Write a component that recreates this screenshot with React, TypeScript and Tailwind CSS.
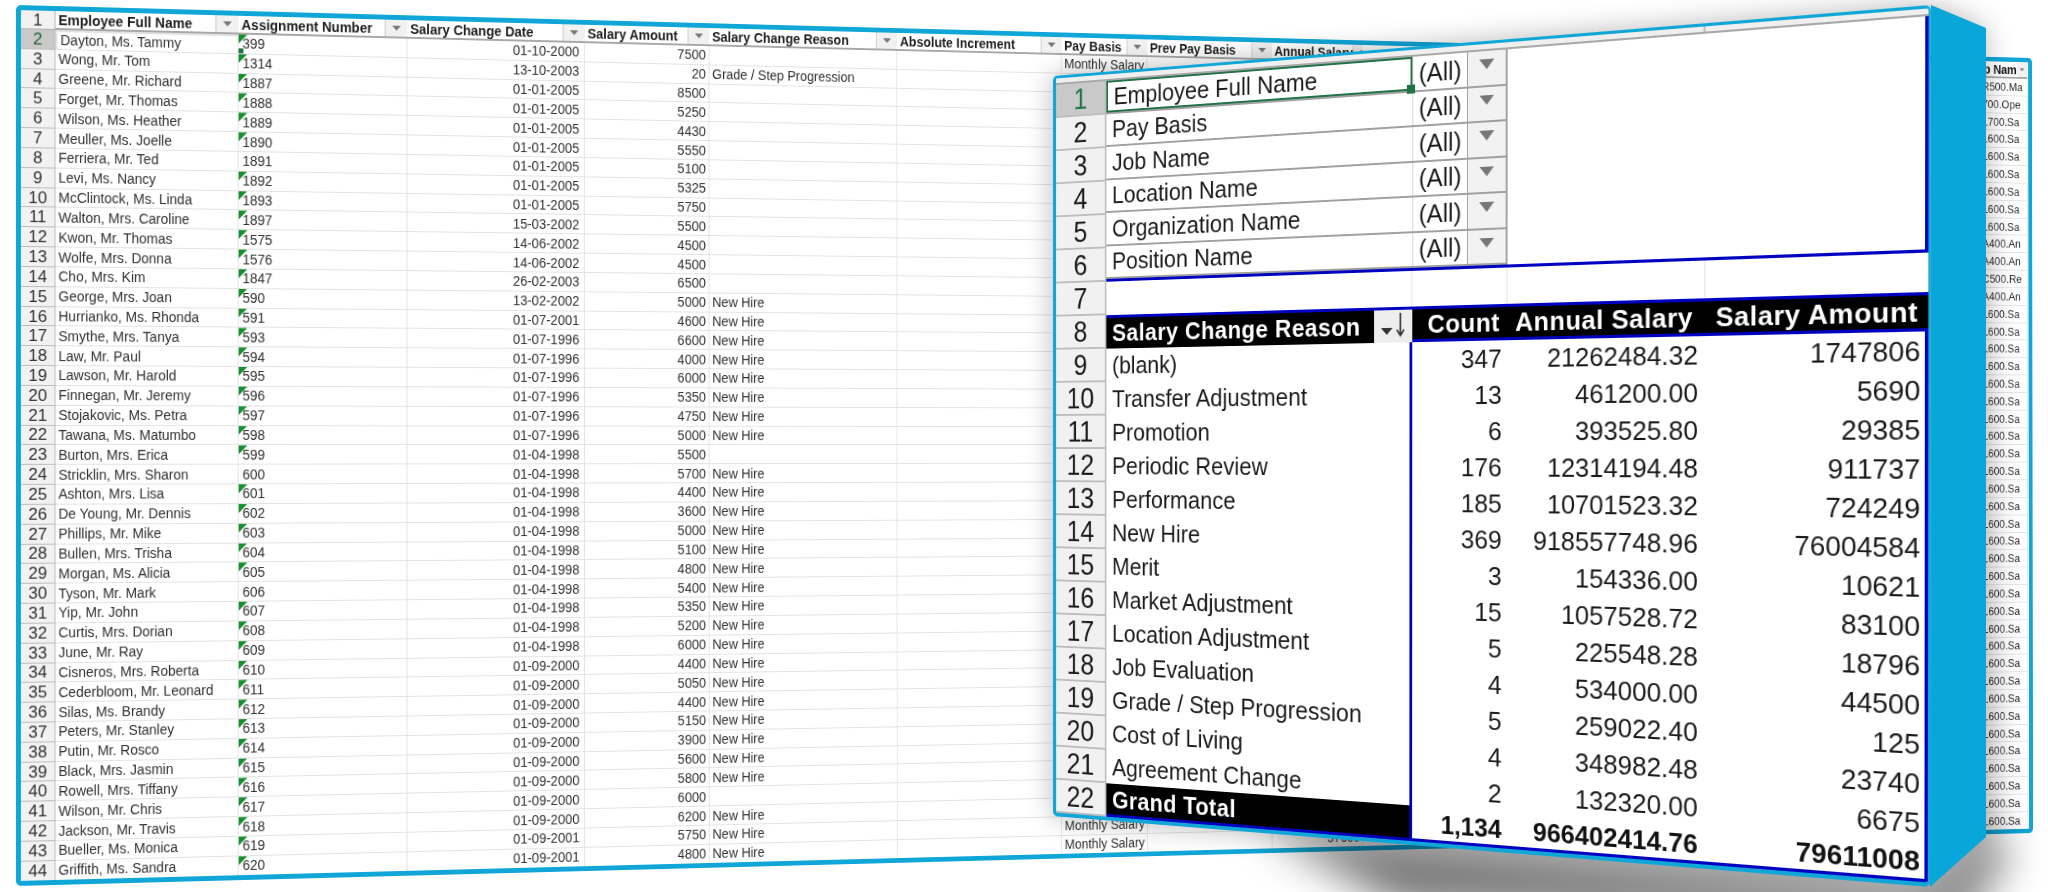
import React from "react";

type P = [number, number];

function quadMatrix(w: number, h: number, q: [P, P, P, P]): string {
  const [[x0, y0], [x1, y1], [x2, y2], [x3, y3]] = q;
  const dx1 = x1 - x2, dx2 = x3 - x2, sx = x0 - x1 + x2 - x3;
  const dy1 = y1 - y2, dy2 = y3 - y2, sy = y0 - y1 + y2 - y3;
  const det = dx1 * dy2 - dx2 * dy1;
  const g = (sx * dy2 - dx2 * sy) / det;
  const k = (dx1 * sy - sx * dy1) / det;
  const a = x1 - x0 + g * x1, b = x3 - x0 + k * x3;
  const d = y1 - y0 + g * y1, e = y3 - y0 + k * y3;
  return `matrix3d(${a / w},${d / w},0,${g / w},${b / h},${e / h},0,${k / h},0,0,1,0,${x0},${y0},0,1)`;
}

const R1 = ["Dayton, Ms. Tammy|399|01-10-2000|7500|","Wong, Mr. Tom|1314|13-10-2003|20|Grade / Step Progression","Greene, Mr. Richard|1887|01-01-2005|8500|","Forget, Mr. Thomas|1888|01-01-2005|5250|","Wilson, Ms. Heather|1889|01-01-2005|4430|","Meuller, Ms. Joelle|1890|01-01-2005|5550|","Ferriera, Mr. Ted|1891|01-01-2005|5100|","Levi, Ms. Nancy|1892|01-01-2005|5325|","McClintock, Ms. Linda|1893|01-01-2005|5750|","Walton, Mrs. Caroline|1897|15-03-2002|5500|","Kwon, Mr. Thomas|1575|14-06-2002|4500|","Wolfe, Mrs. Donna|1576|14-06-2002|4500|","Cho, Mrs. Kim|1847|26-02-2003|6500|","George, Mrs. Joan|590|13-02-2002|5000|New Hire","Hurrianko, Ms. Rhonda|591|01-07-2001|4600|New Hire","Smythe, Mrs. Tanya|593|01-07-1996|6600|New Hire","Law, Mr. Paul|594|01-07-1996|4000|New Hire","Lawson, Mr. Harold|595|01-07-1996|6000|New Hire","Finnegan, Mr. Jeremy|596|01-07-1996|5350|New Hire","Stojakovic, Ms. Petra|597|01-07-1996|4750|New Hire","Tawana, Ms. Matumbo|598|01-07-1996|5000|New Hire","Burton, Mrs. Erica|599|01-04-1998|5500|","Stricklin, Mrs. Sharon|600|01-04-1998|5700|New Hire","Ashton, Mrs. Lisa|601|01-04-1998|4400|New Hire","De Young, Mr. Dennis|602|01-04-1998|3600|New Hire","Phillips, Mr. Mike|603|01-04-1998|5000|New Hire","Bullen, Mrs. Trisha|604|01-04-1998|5100|New Hire","Morgan, Ms. Alicia|605|01-04-1998|4800|New Hire","Tyson, Mr. Mark|606|01-04-1998|5400|New Hire","Yip, Mr. John|607|01-04-1998|5350|New Hire","Curtis, Mrs. Dorian|608|01-04-1998|5200|New Hire","June, Mr. Ray|609|01-04-1998|6000|New Hire","Cisneros, Mrs. Roberta|610|01-09-2000|4400|New Hire","Cederbloom, Mr. Leonard|611|01-09-2000|5050|New Hire","Silas, Ms. Brandy|612|01-09-2000|4400|New Hire","Peters, Mr. Stanley|613|01-09-2000|5150|New Hire","Putin, Mr. Rosco|614|01-09-2000|3900|New Hire","Black, Mrs. Jasmin|615|01-09-2000|5600|New Hire","Rowell, Mrs. Tiffany|616|01-09-2000|5800|New Hire","Wilson, Mr. Chris|617|01-09-2000|6000|","Jackson, Mr. Travis|618|01-09-2000|6200|New Hire","Bueller, Ms. Monica|619|01-09-2001|5750|New Hire","Griffith, Ms. Sandra|620|01-09-2001|4800|New Hire"];
const noTick = new Set(["1891", "600", "606"]);
const lastCol = (i: number) => i === 0 ? "R500.Ma" : i === 1 ? "700.Ope" : i === 2 ? "L700.Sa" : i === 9 || i === 10 || i === 12 ? "A400.An" : i === 11 ? "C500.Re" : "L600.Sa";

const BACK_COLS = "grid grid-cols-[35px_188px_177px_190px_136px_209px_187px_99px_146px_108px_771px_59px]";
const headers = ["Employee Full Name", "Assignment Number", "Salary Change Date", "Salary Amount", "Salary Change Reason", "Absolute Increment", "Pay Basis", "Prev Pay Basis", "Annual Salary"];

function Arrow({ cls }: { cls: string }) {
  return <span className={`block [clip-path:polygon(0_0,100%_0,50%_100%)] ${cls}`} />;
}

function BackSheet() {
  const W = 2316, H = 881;
  return (
    <div
      className="absolute left-0 top-0 origin-top-left box-border overflow-hidden rounded-[5px] border-[5px] border-[#10a7d8] bg-white font-['Liberation_Sans',Arial,sans-serif] text-[14px] leading-none text-[#303030] w-[2316px] h-[881px] blur-[0.4px]"
      style={{ transform: quadMatrix(W, H, [[16, 5], [2032, 58], [2033, 833], [16, 886]]) }}
    >
      <div className={`${BACK_COLS} h-[19px]`}>
        <div className="flex items-center justify-center border-r border-b border-[#b5b5b5] bg-[#f2f2f2] text-[17px]">1</div>
        {headers.map((h) => (
          <div key={h} className="flex items-center justify-between overflow-hidden border-b-2 border-[#a8a8a8] pl-[3px] font-bold text-[#1c1c1c] whitespace-nowrap">
            <span>{h}</span>
            <span className="flex h-full w-[24px] shrink-0 items-center justify-center border-l border-[#ccc] bg-[#f1f1f1]"><Arrow cls="h-[5px] w-[9px] bg-[#777]" /></span>
          </div>
        ))}
        <div />
        <div className="flex items-center justify-end border-b-2 border-[#a8a8a8] font-bold text-[#1c1c1c] whitespace-nowrap">
          <span>p Nam</span>
          <span className="flex h-full w-[14px] shrink-0 items-center justify-center bg-[#f1f1f1]"><Arrow cls="h-[4px] w-[7px] bg-[#888]" /></span>
        </div>
      </div>
      {R1.map((r, i) => {
        const [name, num, date, amt, reason] = r.split("|");
        const cell = "flex items-center overflow-hidden whitespace-nowrap border-b border-r border-[#e3e3e3]";
        return (
          <div key={i} className={`${BACK_COLS} h-[19.83px]`}>
            <div className={`flex items-center justify-center border-r border-b border-[#bdbdbd] text-[17px] ${i === 0 ? "bg-[#c9c9c9] text-[#1f5c38]" : "bg-[#f2f2f2]"}`}>{i + 2}</div>
            <div className={`${cell} pl-[3px] ${i === 0 ? "border-2 border-[#217346]" : ""}`}>{name}</div>
            <div className={`${cell} relative pl-[4px]`}>
              {!noTick.has(num) && <span className="absolute left-0 top-0 h-[9px] w-[9px] bg-[#15902c] [clip-path:polygon(0_0,100%_0,0_100%)]" />}
              {i === 0 && <span className="absolute bottom-0 left-0 h-[5px] w-[5px] bg-[#217346]" />}
              {num}
            </div>
            <div className={`${cell} justify-end pr-[5px]`}>{date}</div>
            <div className={`${cell} justify-end pr-[3px]`}>{amt}</div>
            <div className={`${cell} pl-[3px]`}>{reason}</div>
            <div className={cell} />
            <div className={`${cell} pl-[3px]`}>Monthly Salary</div>
            <div className={cell} />
            <div className={`${cell} justify-end pr-[3px]`}>{Number(amt) * 12}</div>
            <div className={cell} />
            <div className={`${cell} text-[13px]`}>{lastCol(i)}</div>
          </div>
        );
      })}
    </div>
  );
}

const pivot: [string, string, string, string][] = [
  ["(blank)", "347", "21262484.32", "1747806"],
  ["Transfer Adjustment", "13", "461200.00", "5690"],
  ["Promotion", "6", "393525.80", "29385"],
  ["Periodic Review", "176", "12314194.48", "911737"],
  ["Performance", "185", "10701523.32", "724249"],
  ["New Hire", "369", "918557748.96", "76004584"],
  ["Merit", "3", "154336.00", "10621"],
  ["Market Adjustment", "15", "1057528.72", "83100"],
  ["Location Adjustment", "5", "225548.28", "18796"],
  ["Job Evaluation", "4", "534000.00", "44500"],
  ["Grade / Step Progression", "5", "259022.40", "125"],
  ["Cost of Living", "4", "348982.48", "23740"],
  ["Agreement Change", "2", "132320.00", "6675"],
];
const filters = ["Employee Full Name", "Pay Basis", "Job Name", "Location Name", "Organization Name", "Position Name"];

function FrontSheet() {
  const W = 935, H = 806;
  const nums = Array.from({ length: 22 }, (_, i) => i + 1);
  return (
    <div
      className="absolute left-0 top-0 origin-top-left box-border flex h-[806px] w-[935px] flex-col overflow-hidden rounded-[5px] border-t-[3px] border-b-4 border-l-4 border-r-2 border-[#10a7d8] bg-white font-['Liberation_Sans',Arial,sans-serif] text-[26px] leading-none text-[#1a1a1a] blur-[0.4px]"
      style={{ transform: quadMatrix(W, H, [[1053, 76], [1931, 5], [1930, 887], [1053, 816]]) }}
    >
      <div className="flex h-[7px] shrink-0 border-b-2 border-[#a8a8a8] bg-[#efefef]">
        <div className="w-[63px]" />
        <div className="w-[658px] border-r-2 border-[#bdbdbd]" />
      </div>
      <div className="flex min-h-0 flex-1">
        <div className="flex w-[63px] shrink-0 flex-col">
          {nums.map((n) => (
            <div key={n} className={`flex h-[36px] shrink-0 items-center justify-center border-r-2 border-b-2 border-[#bdbdbd] text-[31px] ${n === 1 ? "bg-[#c9c9c9] text-[#217346]" : "bg-[#f1f1f1]"}`}>{n}</div>
          ))}
        </div>
        <div className="flex w-[866px] flex-col">
          <div className="flex h-[216px] shrink-0 border-r-[3px] border-b-[3px] border-[#0000c0]">
            <div className="w-[458px] shrink-0">
              {filters.map((f, i) => (
                <div key={f} className="grid h-[35.5px] grid-cols-[356px_59px_43px] border-b-2 border-[#a0a0a0]">
                  <div className={`relative flex items-center pl-[7px] whitespace-nowrap ${i === 0 ? "border-2 border-[#217346]" : ""}`}>
                    {f}
                    {i === 0 && <span className="absolute -bottom-[5px] -right-[5px] h-[9px] w-[9px] bg-[#217346]" />}
                  </div>
                  <div className="flex items-center justify-center border-l border-[#d0d0d0]">(All)</div>
                  <div className="flex items-start justify-center border-l border-r-2 border-[#a0a0a0] bg-[#f2f2f2] pt-[8px]"><Arrow cls="h-[10px] w-[16px] bg-[#777]" /></div>
                </div>
              ))}
            </div>
          </div>
          <div className="grid h-[36px] shrink-0 grid-cols-[356px_102px_200px_208px]">
            <div className="border-r border-[#e3e3e3]" />
            <div className="border-r border-[#e3e3e3]" />
            <div className="border-r border-[#e3e3e3]" />
            <div />
          </div>
          <div className="grid h-[36px] shrink-0 grid-cols-[356px_102px_200px_208px] border-t-[3px] border-[#0000c0] bg-black font-bold tracking-[0.5px] text-white">
            <div className="flex items-center justify-between pl-[7px] whitespace-nowrap">
              <span className="-mt-[2px]">Salary Change Reason</span>
              <span className="flex h-full w-[42px] shrink-0 items-center justify-center gap-[2px] bg-[#eeeeee]">
                <Arrow cls="mt-[10px] h-[7px] w-[13px] bg-[#333]" />
                <svg width="12" height="26" viewBox="0 0 12 26" className="-mt-[4px]"><path d="M6 1v22M2 18l4 6 4-6" fill="none" stroke="#333" strokeWidth="1.8" /></svg>
              </span>
            </div>
            <div className="flex items-center justify-end pr-[8px] border-b-[3px] border-[#0000c0]">Count</div>
            <div className="flex items-center justify-end pr-[12px] border-b-[3px] border-[#0000c0]">Annual Salary</div>
            <div className="flex items-center justify-end pr-[9px] border-b-[3px] border-[#0000c0] whitespace-nowrap">Salary Amount</div>
          </div>
          {pivot.map(([l, c, a, s]) => (
            <div key={l} className="grid h-[36px] shrink-0 grid-cols-[356px_102px_200px_208px]">
              <div className="flex items-center border-r-[3px] border-[#0000c0] pl-[7px] whitespace-nowrap">{l}</div>
              <div className="flex items-center justify-end pr-[6px]">{c}</div>
              <div className="flex items-center justify-end pr-[7px]">{a}</div>
              <div className="flex items-center justify-end border-r-[3px] border-[#0000c0] pr-[4px]">{s}</div>
            </div>
          ))}
          <div className="grid h-[36px] shrink-0 grid-cols-[356px_102px_200px_208px] border-b-[3px] border-[#0000c0] font-bold text-[#111]">
            <div className="flex items-center border-r-[3px] border-[#0000c0] bg-black pl-[7px] tracking-[0.5px] text-white">Grand Total</div>
            <div className="flex items-center justify-end pr-[6px]">1,134</div>
            <div className="flex items-center justify-end pr-[7px]">966402414.76</div>
            <div className="flex items-center justify-end border-r-[3px] border-[#0000c0] pr-[4px]">79611008</div>
          </div>
        </div>
      </div>
    </div>
  );
}

export default function App() {
  return (
    <div className="relative h-[892px] w-[2048px] overflow-hidden bg-white">
      <BackSheet />
      <svg className="absolute inset-0" width="2048" height="892" viewBox="0 0 2048 892">
        <defs>
          <filter id="s1" x="-20%" y="-20%" width="140%" height="140%"><feGaussianBlur stdDeviation="14" /></filter>
          <filter id="s2" x="-20%" y="-40%" width="140%" height="180%"><feGaussianBlur stdDeviation="20" /></filter>
        </defs>
        <polygon points="1053,76 1931,5 1985,28 1996,837 1930,887 1053,816" fill="#000" opacity="0.28" filter="url(#s1)" />
        <polygon points="1260,830 1930,890 1990,835 2012,850 1960,925 1400,905" fill="#000" opacity="0.55" filter="url(#s2)" />
        <polygon points="1931,5 1986,28 1986,837 1930,887" fill="#09a6da" />
      </svg>
      <FrontSheet />
    </div>
  );
}
